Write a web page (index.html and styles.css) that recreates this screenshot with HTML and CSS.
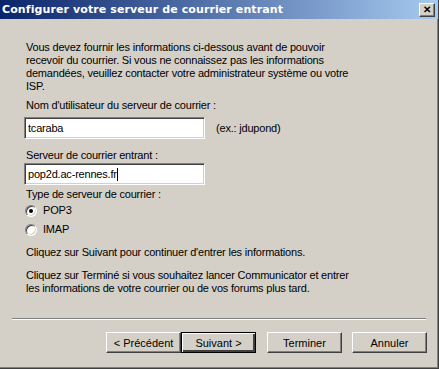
FILE: index.html
```html
<!DOCTYPE html>
<html lang="fr">

<head>
    <meta charset="UTF-8">
    <meta name="viewport" content="width=device-width, initial-scale=1.0">
    <title>Configurer votre serveur de courrier entrant</title>
    <link rel="stylesheet" href="styles.css">
</head>

<body>
    <div class="window">
        <div class="titlebar">
            <span class="title">Configurer votre serveur de courrier entrant</span>
            <button class="close-button">&#x2715;</button>
        </div>
        <div class="content">
            <p class="intro">Vous devez fournir les informations ci-dessous avant de pouvoir<br>recevoir du courrier. Si vous ne connaissez pas les informations<br>demandées, veuillez contacter votre administrateur système ou votre<br>ISP.</p>

            <label class="field-label">Nom d'utilisateur du serveur de courrier :</label>
            <div class="field-row">
                <div class="text-input">tcaraba</div>
                <span class="hint">(ex.: jdupond)</span>
            </div>

            <label class="field-label second">Serveur de courrier entrant :</label>
            <div class="field-row">
                <div class="text-input">pop2d.ac-rennes.fr<span class="caret"></span></div>
            </div>

            <label class="field-label type-label">Type de serveur de courrier :</label>
            <div class="radio-row"><span class="radio checked"></span>POP3</div>
            <div class="radio-row"><span class="radio"></span>IMAP</div>

            <p class="info">Cliquez sur Suivant pour continuer d'entrer les informations.</p>
            <p class="info">Cliquez sur Terminé si vous souhaitez lancer Communicator et entrer<br>les informations de votre courrier ou de vos forums plus tard.</p>
        </div>
        <div class="separator"></div>
        <div class="buttons">
            <button class="btn">&lt; Précédent</button>
            <button class="btn default">Suivant &gt;</button>
            <button class="btn spaced">Terminer</button>
            <button class="btn">Annuler</button>
        </div>
    </div>
</body>

</html>
```

FILE: styles.css
```css
* {
    box-sizing: border-box;
}

body {
    margin: 0;
    padding: 0;
    background-color: #d4d0c8;
    font-family: "Liberation Sans", Arial, sans-serif;
    font-size: 11px;
    color: #000;
}

.window {
    width: 439px;
    height: 369px;
    display: flex;
    flex-direction: column;
    background-color: #d4d0c8;
    border-bottom: 1px solid #404040;
    border-right: 1px solid #404040;
    box-shadow: inset 0 -1px 0 #808080, inset -1px 0 0 #808080;
}

.titlebar {
    height: 19px;
    display: flex;
    align-items: center;
    justify-content: space-between;
    padding: 0 3px 0 2px;
    background: linear-gradient(to right, #0a246a, #a6caf0);
}

.title {
    color: #fff;
    font-family: "DejaVu Sans", Verdana, sans-serif;
    font-weight: bold;
    font-size: 11px;
    letter-spacing: 0.1px;
}

.close-button {
    width: 16px;
    height: 14px;
    padding: 0;
    font-size: 10px;
    font-weight: bold;
    line-height: 10px;
    color: #000;
    background-color: #d4d0c8;
    border: 1px solid;
    border-color: #fff #404040 #404040 #fff;
    box-shadow: inset -1px -1px 0 #808080;
}

.content {
    flex: 1;
    padding: 22px 0 0 26px;
    line-height: 13px;
    letter-spacing: -0.2px;
}

.intro {
    margin: 0 0 6px;
    white-space: nowrap;
}

.field-label {
    display: block;
    margin-bottom: 5px;
}

.field-label.second {
    margin-top: 10px;
    margin-bottom: 1px;
}

.field-row {
    display: flex;
    align-items: center;
    margin-left: -2px;
}

.text-input {
    width: 181px;
    height: 22px;
    padding: 4px 3px;
    background-color: #fff;
    border: 1px solid;
    border-color: #808080 #fff #fff #808080;
    box-shadow: inset 1px 1px 0 #404040, inset -1px -1px 0 #d4d0c8;
    line-height: 13px;
    white-space: nowrap;
}

.caret {
    display: inline-block;
    width: 1px;
    height: 13px;
    background-color: #000;
    vertical-align: top;
}

.hint {
    margin-left: 11px;
}

.type-label {
    margin-top: 3px;
    margin-bottom: 0;
}

.radio-row {
    display: flex;
    align-items: center;
    height: 19px;
    margin-left: -1px;
}

.radio {
    width: 12px;
    height: 12px;
    margin-right: 6px;
    border-radius: 50%;
    background-color: #fff;
    border: 1px solid;
    border-color: #808080 #fff #fff #808080;
    box-shadow: inset 1px 1px 0 #404040, inset -1px -1px 0 #d4d0c8;
    position: relative;
}

.radio.checked::after {
    content: "";
    position: absolute;
    left: 3px;
    top: 3px;
    width: 4px;
    height: 4px;
    border-radius: 50%;
    background-color: #000;
}

.info {
    margin: 7px 0 0;
    white-space: nowrap;
}

.info + .info {
    margin-top: 10px;
}

.separator {
    margin: 1px 12px 0 12px;
    height: 2px;
    border-top: 1px solid #808080;
    border-bottom: 1px solid #fff;
}

.buttons {
    display: flex;
    justify-content: flex-end;
    padding: 12px 11px 15px 0;
}

.btn {
    width: 75px;
    height: 21px;
    padding: 0;
    font-family: "Liberation Sans", Arial, sans-serif;
    font-size: 11px;
    color: #000;
    background-color: #d4d0c8;
    border: 1px solid;
    border-color: #fff #404040 #404040 #fff;
    box-shadow: inset -1px -1px 0 #808080;
}

.btn.default {
    border: 1px solid #000;
    box-shadow: inset 1px 1px 0 #fff, inset -2px -2px 0 #404040, inset -1px -1px 0 #808080;
}

.btn.spaced {
    margin-left: 11px;
    margin-right: 10px;
}
```
